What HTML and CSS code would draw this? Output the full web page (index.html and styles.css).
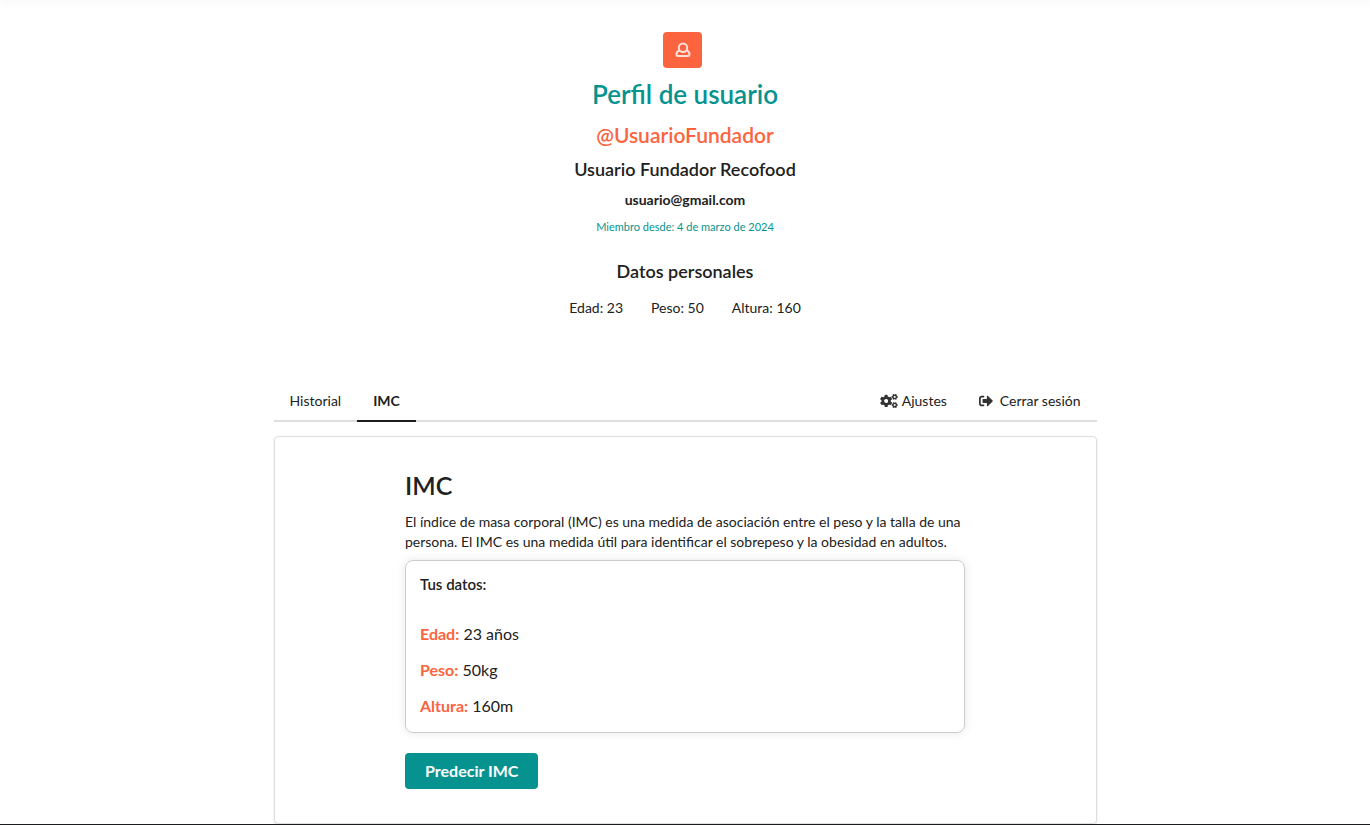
FILE: index.html
```html
<!DOCTYPE html>
<html lang="es">
<head>
<meta charset="utf-8">
<meta name="viewport" content="width=device-width, initial-scale=1">
<title>Perfil de usuario</title>
<link rel="stylesheet" href="styles.css">
</head>
<body>
<div class="topbar"></div>
<main class="page">
  <section class="profile">
    <button class="avatar" type="button" aria-label="Usuario">
      <svg viewBox="0 0 16 16" width="16" height="16" fill="none" stroke="currentColor" stroke-width="2">
        <circle cx="8" cy="5.7" r="4.2"/>
        <path d="M4.6 8.400C2.400 9.200 1.500 10.500 1.500 12.200v.5c0 .8.6 1.300 1.400 1.300h10.200c.8 0 1.400-.5 1.400-1.300v-.5c0-1.700-.9-3-3.100-3.800"/>
      </svg>
    </button>
    <h1 class="title">Perfil de usuario</h1>
    <h2 class="handle">@UsuarioFundador</h2>
    <h3 class="name">Usuario Fundador Recofood</h3>
    <p class="email">usuario@gmail.com</p>
    <p class="since">Miembro desde: 4 de marzo de 2024</p>
    <h3 class="name">Datos personales</h3>
    <ul class="stats">
      <li>Edad: 23</li>
      <li>Peso: 50</li>
      <li>Altura: 160</li>
    </ul>
  </section>

  <nav class="tabs">
    <a class="tab" href="#historial">Historial</a>
    <a class="tab active" href="#imc">IMC</a>
    <a class="tab push" href="#ajustes">
      <svg class="icon" viewBox="0 0 640 512" width="18" height="14" fill="currentColor" aria-hidden="true">
        <defs><path id="cog" d="M512.1 191l-8.2 14.3c-3 5.3-9.4 7.5-15.1 5.4-11.8-4.4-22.6-10.7-32.1-18.6-4.6-3.8-5.8-10.5-2.8-15.7l8.2-14.3c-6.9-8-12.3-17.3-15.9-27.4h-16.5c-6 0-11.2-4.3-12.2-10.3-2-12-2.1-24.6 0-37.1 1-6 6.2-10.4 12.2-10.4h16.5c3.6-10.1 9-19.4 15.9-27.4l-8.2-14.3c-3-5.2-1.9-11.9 2.8-15.7 9.5-7.9 20.4-14.2 32.1-18.6 5.7-2.1 12.1.1 15.1 5.4l8.2 14.3c10.5-1.9 21.2-1.9 31.7 0L552 6.3c3-5.3 9.4-7.5 15.1-5.4 11.8 4.4 22.6 10.7 32.1 18.6 4.6 3.8 5.8 10.5 2.8 15.7l-8.2 14.3c6.9 8 12.3 17.3 15.9 27.4h16.5c6 0 11.2 4.3 12.2 10.3 2 12 2.1 24.6 0 37.1-1 6-6.2 10.4-12.2 10.4h-16.5c-3.6 10.1-9 19.4-15.9 27.4l8.2 14.3c3 5.2 1.9 11.9-2.8 15.7-9.5 7.9-20.4 14.2-32.1 18.6-5.7 2.1-12.1-.1-15.1-5.4l-8.2-14.3c-10.4 1.9-21.2 1.9-31.7 0zm-10.5-58.8c38.5 29.6 82.4-14.3 52.8-52.8-38.5-29.7-82.4 14.3-52.8 52.8z"/></defs>
        <use href="#cog"/>
        <use href="#cog" y="299"/>
        <path d="M386.3 286.1l33.7 16.8c10.1 5.8 14.5 18.1 10.5 29.1-8.9 24.2-26.4 46.4-42.6 65.8-7.4 8.9-20.2 11.1-30.3 5.3l-29.1-16.8c-16 13.7-34.6 24.6-54.9 31.7v33.6c0 11.6-8.3 21.6-19.7 23.6-24.6 4.2-50.4 4.4-75.9 0-11.5-2-20-11.9-20-23.6V418c-20.3-7.2-38.9-18-54.9-31.7L74 403c-10 5.8-22.9 3.6-30.3-5.3-16.2-19.4-33.3-41.6-42.2-65.7-4-10.9.4-23.2 10.5-29.1l33.3-16.8c-3.9-20.9-3.9-42.4 0-63.4L12 205.8c-10.1-5.8-14.6-18.1-10.5-29 8.9-24.2 26-46.4 42.2-65.8 7.4-8.9 20.2-11.1 30.3-5.3l29.1 16.8c16-13.7 34.6-24.6 54.9-31.7V57.1c0-11.5 8.2-21.5 19.6-23.5 24.6-4.2 50.5-4.4 76-.1 11.5 2 20 11.9 20 23.6v33.6c20.3 7.2 38.9 18 54.9 31.7l29.1-16.8c10-5.8 22.9-3.6 30.3 5.3 16.2 19.4 33.2 41.6 42.1 65.8 4 10.9.1 23.2-10 29.1l-33.7 16.8c3.9 21 3.9 42.5 0 63.5zm-117.6 21.1c59.2-77-28.7-164.9-105.7-105.7-59.2 77 28.7 164.9 105.7 105.7z"/>
      </svg>
      Ajustes
    </a>
    <a class="tab" href="#salir">
      <svg class="icon wide" viewBox="0 0 512 512" width="14" height="14" fill="currentColor" aria-hidden="true">
        <path d="M497 273L329 441c-15 15-41 4.500-41-17v-96H152c-13.300 0-24-10.700-24-24v-96c0-13.300 10.700-24 24-24h136V88c0-21.400 25.900-32 41-17l168 168c9.300 9.400 9.300 24.600 0 34zM192 436v-40c0-6.600-5.400-12-12-12H96c-17.700 0-32-14.300-32-32V160c0-17.700 14.300-32 32-32h84c6.600 0 12-5.400 12-12V76c0-6.600-5.400-12-12-12H96c-53 0-96 43-96 96v192c0 53 43 96 96 96h84c6.600 0 12-5.400 12-12z"/>
      </svg>
      Cerrar sesión
    </a>
  </nav>

  <section class="panel" id="imc">
    <div class="content">
      <h2 class="heading">IMC</h2>
      <p class="intro">El índice de masa corporal (IMC) es una medida de asociación entre el peso y la talla de una persona. El IMC es una medida útil para identificar el sobrepeso y la obesidad en adultos.</p>
      <div class="card">
        <h4 class="card-title">Tus datos:</h4>
        <p class="datum"><b>Edad:</b> 23 años</p>
        <p class="datum"><b>Peso:</b> 50kg</p>
        <p class="datum"><b>Altura:</b> 160m</p>
      </div>
      <button class="predict" type="button">Predecir IMC</button>
    </div>
  </section>
</main>
<footer class="footer"></footer>
</body>
</html>
```
FILE: styles.css
```css
* { box-sizing: border-box; }

body {
  margin: 0;
  background: #fff;
  color: #212121;
  font-family: Lato, "Liberation Sans", sans-serif;
  font-size: 14px;
  line-height: 20px;
}

h1, h2, h3, h4, p, ul { margin: 0; padding: 0; }

h1, h2, h3, h4 { font-weight: 600; }

.topbar {
  height: 0;
  box-shadow: 0 0 8px 2px rgba(0, 0, 0, 0.06);
}

.page {
  width: calc(60% + 1px);
  margin: 0 auto;
  padding-top: 32px;
}

.profile {
  display: flex;
  flex-direction: column;
  align-items: center;
  text-align: center;
}

.avatar {
  display: flex;
  align-items: center;
  justify-content: center;
  width: 39px;
  height: 36px;
  margin-right: 5px;
  padding: 0;
  border: 0;
  border-radius: 4px;
  background: #fc6440;
  color: #ffe0d9;
}

.title {
  margin-top: 10px;
  color: #069390;
  font-size: 26px;
  line-height: 32px;
}

.handle {
  margin-top: 11px;
  color: #fc6440;
  font-size: 21px;
  line-height: 28px;
}

.name {
  margin-top: 8px;
  font-size: 18px;
  line-height: 24px;
}

.email {
  margin-top: 9px;
  font-weight: 700;
}

.since {
  margin: 9px 0 16px;
  color: #069390;
  font-size: 11px;
  line-height: 16px;
}

.stats {
  display: flex;
  gap: 28px;
  margin: 15px 0 64px;
  list-style: none;
}

.tabs {
  display: flex;
  border-bottom: 2px solid #dededf;
}

.tab {
  display: flex;
  align-items: center;
  margin-bottom: -2px;
  padding: 9px 16px;
  border-bottom: 2px solid transparent;
  color: #212121;
  text-decoration: none;
}

.tab.active {
  border-color: #1b1c1d;
  font-weight: 700;
}

.push { margin-left: auto; }

.icon {
  margin-right: 4px;
  color: #333;
}

.icon.wide { margin-right: 7px; }

.panel {
  margin-top: 14px;
  padding: 32px 16px 34px;
  border: 1px solid #dededf;
  border-radius: 4px;
  box-shadow: 0 1px 2px rgba(34, 36, 38, 0.15);
}

.content {
  max-width: 560px;
  margin: 0 auto;
}

.heading {
  font-size: 25px;
  line-height: 32px;
}

.intro { margin-top: 11px; }

.card {
  margin-top: 8px;
  padding: 13px 14px 15px;
  border: 1px solid #ccc;
  border-radius: 8px;
  box-shadow: 0 0 10px rgba(0, 0, 0, 0.1);
}

.card-title {
  margin-bottom: 28px;
  font-size: 15px;
}

.datum {
  font-size: 16px;
  line-height: 23px;
}

.datum + .datum { margin-top: 13px; }

.datum b { color: #fc6440; }

.predict {
  display: block;
  margin-top: 20px;
  padding: 8px 20px;
  border: 0;
  border-radius: 4px;
  background: #069390;
  color: #fff;
  font: 700 16px/20px Lato, "Liberation Sans", sans-serif;
}

.footer {
  height: 1px;
  background: #1b1c1d;
}
```
